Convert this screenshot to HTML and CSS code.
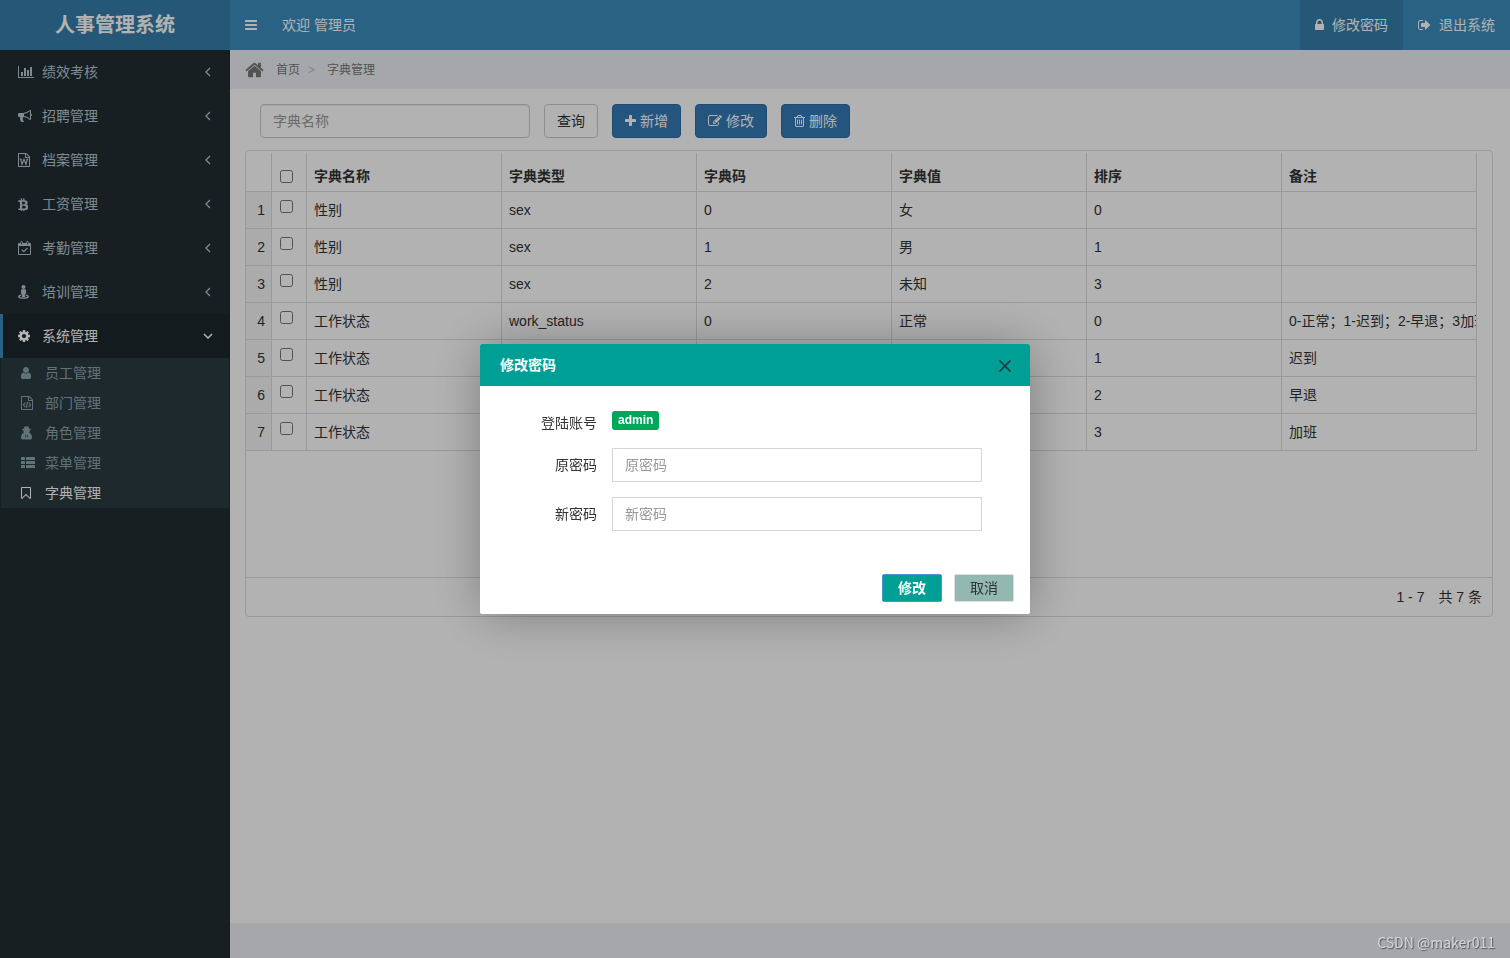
FILE: index.html
```html
<!DOCTYPE html>
<html lang="zh-CN">
<head>
<meta charset="utf-8">
<meta name="viewport" content="width=device-width, initial-scale=1">
<title>人事管理系统</title>
<link rel="stylesheet" href="styles.css">
</head>
<body>
<svg class="sprite" aria-hidden="true">
  <symbol id="i-bars" viewBox="128 0 1536 1792"><path d="M1664 1344v128q0 26-19 45t-45 19h-1408q-26 0-45-19t-19-45v-128q0-26 19-45t45-19h1408q26 0 45 19t19 45zm0-512v128q0 26-19 45t-45 19h-1408q-26 0-45-19t-19-45v-128q0-26 19-45t45-19h1408q26 0 45 19t19 45zm0-512v128q0 26-19 45t-45 19h-1408q-26 0-45-19t-19-45v-128q0-26 19-45t45-19h1408q26 0 45 19t19 45z"/></symbol>
  <symbol id="i-lock" viewBox="320 0 1152 1792"><path d="M640 768h512v-192q0-106-75-181t-181-75-181 75-75 181v192zm832 96v576q0 40-28 68t-68 28h-960q-40 0-68-28t-28-68v-576q0-40 28-68t68-28h32v-192q0-184 132-316t316-132 316 132 132 316v192h32q40 0 68 28t28 68z"/></symbol>
  <symbol id="i-out" viewBox="64 0 1664 1792"><path d="M704 1440q0 4 1 20t.5 26.500-3 23.500-10 19.500-20.500 6.500h-320q-119 0-203.500-84.500t-84.500-203.500v-704q0-119 84.500-203.500t203.500-84.500h320q13 0 22.500 9.500t9.500 22.500q0 4 1 20t.5 26.500-3 23.500-10 19.500-20.500 6.500h-320q-66 0-113 47t-47 113v704q0 66 47 113t113 47h312l11.500 1 11.500 3 8 5.500 7 9 2 13.500zm928-544q0 26-19 45l-544 544q-19 19-45 19t-45-19-19-45v-288h-448q-26 0-45-19t-19-45v-384q0-26 19-45t45-19h448v-288q0-26 19-45t45-19 45 19l544 544q19 19 19 45z"/></symbol>
  <symbol id="i-home" viewBox="64 0 1664 1792"><path d="M1472 992v480q0 26-19 45t-45 19h-384v-384h-256v384h-384q-26 0-45-19t-19-45v-480q0-1 .5-3t.5-3l575-474 575 474q1 2 1 6zm223-69l-62 74q-8 9-21 11h-3q-13 0-21-7l-692-577-692 577q-12 8-24 7-13-2-21-11l-62-74q-8-10-7-23.500t11-21.500l719-599q32-26 76-26t76 26l244 204v-195q0-14 9-23t23-9h192q14 0 23 9t9 23v408l219 182q10 8 11 21.500t-7 23.500z"/></symbol>
  <symbol id="i-plus" viewBox="192 0 1408 1792"><path d="M1600 736v192q0 40-28 68t-68 28h-416v416q0 40-28 68t-68 28h-192q-40 0-68-28t-28-68v-416h-416q-40 0-68-28t-28-68v-192q0-40 28-68t68-28h416v-416q0-40 28-68t68-28h192q40 0 68 28t28 68v416h416q40 0 68 28t28 68z"/></symbol>
  <symbol id="i-edit" viewBox="0 0 1792 1792"><path d="M888 1184l116-116-152-152-116 116v56h96v96h56zm440-720q-16-16-33 1l-350 350q-17 17-1 33t33-1l350-350q17-17 1-33zm80 594v190q0 119-84.500 203.500t-203.500 84.500h-832q-119 0-203.500-84.500t-84.500-203.500v-832q0-119 84.500-203.500t203.500-84.500h832q63 0 117 25 15 7 18 23 3 17-9 29l-49 49q-14 14-32 8-23-6-45-6h-832q-66 0-113 47t-47 113v832q0 66 47 113t113 47h832q66 0 113-47t47-113v-126q0-13 9-22l64-64q15-15 35-7t20 29zm-96-738l288 288-672 672h-288v-288zm444 132l-92 92-288-288 92-92q28-28 68-28t68 28l152 152q28 28 28 68t-28 68z"/></symbol>
  <symbol id="i-trash" viewBox="192 0 1408 1792"><path d="M704 736v576q0 14-9 23t-23 9h-64q-14 0-23-9t-9-23v-576q0-14 9-23t23-9h64q14 0 23 9t9 23zm256 0v576q0 14-9 23t-23 9h-64q-14 0-23-9t-9-23v-576q0-14 9-23t23-9h64q14 0 23 9t9 23zm256 0v576q0 14-9 23t-23 9h-64q-14 0-23-9t-9-23v-576q0-14 9-23t23-9h64q14 0 23 9t9 23zm128 724v-948h-896v948q0 22 7 40.500t14.500 27 10.500 8.500h832q3 0 10.500-8.500t14.500-27 7-40.500zm-672-1076h448l-48-117q-7-9-17-11h-317q-10 2-17 11zm928 32v64q0 14-9 23t-23 9h-96v948q0 83-47 143.500t-113 60.500h-832q-66 0-113-58.500t-47-141.500v-952h-96q-14 0-23-9t-9-23v-64q0-14 9-23t23-9h309l70-167q15-37 54-63t79-26h320q40 0 79 26t54 63l70 167h309q14 0 23 9t9 23z"/></symbol>
  <symbol id="i-chart" viewBox="0 0 2048 1792"><path d="M640 896v512h-256v-512h256zm384-512v1024h-256v-1024h256zm1024 1152v128h-2048v-1536h128v1408h1920zm-640-896v768h-256v-768h256zm384-384v1152h-256v-1152h256z"/></symbol>
  <symbol id="i-horn" viewBox="0 0 1792 1792"><path d="M1664 640q53 0 90.500 37.500t37.500 90.500-37.500 90.500-90.500 37.500v384q0 52-38 90t-90 38q-417-347-812-380-58 19-91 66t-31 100.500 40 92.500q-20 33-23 65.500t6 58 33.500 55 48 50 61.500 50.500q-29 58-111.500 83t-168.500 11.500-132-55.500q-7-23-29.500-87.500t-32-94.500-23-89-15-101 3.500-98.500 22-110.500h-122q-66 0-113-47t-47-113v-192q0-66 47-113t113-47h480q435 0 896-384 52 0 90 38t38 90v384zm-128 604v-954q-394 302-768 343v270q377 42 768 341z"/></symbol>
  <symbol id="i-word" viewBox="128 0 1536 1792"><path d="M1596 380q28 28 48 76t20 88v1152q0 40-28 68t-68 28h-1344q-40 0-68-28t-28-68v-1600q0-40 28-68t68-28h896q40 0 88 20t76 48zm-444-244v376h376q-10-29-22-41l-313-313q-12-12-41-22zm384 1528v-1024h-416q-40 0-68-28t-28-68v-416h-768v1536h1280z"/><path class="line" stroke-width="150" d="M350 820h260M1180 820h260M480 820L640 1460L896 800L1150 1460L1312 820"/></symbol>
  <symbol id="i-code" viewBox="128 0 1536 1792"><path d="M1596 380q28 28 48 76t20 88v1152q0 40-28 68t-68 28h-1344q-40 0-68-28t-28-68v-1600q0-40 28-68t68-28h896q40 0 88 20t76 48zm-444-244v376h376q-10-29-22-41l-313-313q-12-12-41-22zm384 1528v-1024h-416q-40 0-68-28t-28-68v-416h-768v1536h1280z"/><path class="line" stroke-width="150" d="M670 830L440 1130L670 1430M1120 830L1350 1130L1120 1430M970 740L820 1530"/></symbol>
  <symbol id="i-coin" viewBox="80 64 1180 1652"><path d="M1217 713q18 182-131 258 117 28 175 103t45 214q-7 71-32.500 125t-64.500 89-97 58.500-121.500 34.500-145.500 15v182h-154v-180q-80 0-122-1v181h-154v-182q-18 0-54-.5t-55-.5h-200l31-183h111q50 0 58-51v-402h16q-6-1-16-1v-287q-13-68-89-68h-111v-164l212 1q64 0 97-1v-252h154v247q82-2 122-2v-245h154v252q79 7 140 22.500t113 45 82.500 78 36.500 114.500zm-215 545q0-36-15-64t-37-46-57.500-30.500-65.500-18.500-74-9-69-3-64.500 1-47.500 1v338q8 0 37 .5t48 .5 53-1.500 58.500-4 57-8.500 55.500-14 47.500-21 39.500-30 24.500-40 9.500-51zm-71-476q0-33-12.500-58.500t-30.500-42-48-28-55-16.500-61.500-8-58-2.500-54 1-39.500.5v307q5 0 34.500.5t46.500 0 50-2 55-5.500 51.500-11 48.500-18.500 37-27 27-38.500 9-51z"/></symbol>
  <symbol id="i-calendar" viewBox="0 0 13 14"><path d="M0 3q0-1 1-1h1.500v-.8q0-1.200 1.100-1.200t1.100 1.200v.8h3.600v-.8q0-1.200 1.100-1.200t1.100 1.200v.8h1.500q1 0 1 1v10q0 1-1 1h-11q-1 0-1-1zM1 5v8h11v-8zM3.200 1v2.500h.8v-2.500zM9 1v2.500h.8v-2.500z"/><path class="line" stroke-width="1.200" d="M3.800 8.700l2 2 3.600-3.600"/></symbol>
  <symbol id="i-person" viewBox="0 0 12 14"><circle cx="5.500" cy="2" r="2"/><path d="M4 4.200h3q1 0 1 1v3.200l-.8.600v2.500q0 .8-.7.800h-2q-.7 0-.7-.8v-2.500l-.8-.6v-3.200q0-1 1-1z"/><path class="line" stroke-width="1.300" d="M3 10.200C-.6 10.800-.1 13.200 5.500 13.200S11.600 10.800 8 10.200"/></symbol>
  <symbol id="i-cog" viewBox="128 0 1536 1792"><path d="M1152 896q0-106-75-181t-181-75-181 75-75 181 75 181 181 75 181-75 75-181zm512-109v222q0 12-8 23t-20 13l-185 28q-19 54-39 91 35 50 107 138 10 12 10 25t-9 23q-27 37-99 108t-94 71q-12 0-26-9l-138-108q-44 23-91 38-16 136-29 186-7 28-36 28h-222q-14 0-24.500-8.500t-11.500-21.500l-28-184q-49-16-90-37l-141 107q-10 9-25 9-14 0-25-11-126-114-165-168-7-10-7-23 0-12 8-23 15-21 51-66.500t54-70.500q-27-50-41-99l-183-27q-13-2-21-12.500t-8-23.500v-222q0-12 8-23t19-13l186-28q14-46 39-92-40-57-107-138-10-12-10-24 0-10 9-23 26-36 98.500-107.500t94.500-71.500q13 0 26 10l138 107q44-23 91-38 16-136 29-186 7-28 36-28h222q14 0 24.500 8.500t11.500 21.500l28 184q49 16 90 37l142-107q9-9 24-9 13 0 25 10 129 119 165 170 7 8 7 22 0 12-8 23-15 21-51 66.500t-54 70.500q26 50 41 98l183 28q13 2 21 12.500t8 23.500z"/></symbol>
  <symbol id="i-user" viewBox="256 0 1280 1792"><path d="M1536 1399q0 109-62.500 187t-150.500 78h-854q-88 0-150.500-78t-62.500-187q0-85 8.500-160.500t31.500-152 58.500-131 94-89 134.500-34.500q131 128 313 128t313-128q76 0 134.500 34.500t94 89 58.500 131 31.500 152 8.500 160.500zm-256-887q0 159-112.500 271.500t-271.500 112.500-271.500-112.500-112.500-271.500 112.500-271.500 271.500-112.500 271.500 112.500 112.500 271.500z"/></symbol>
  <symbol id="i-agent" viewBox="0 0 11 14"><path fill-rule="evenodd" d="M3 2.500Q3.200.2 4.300.2l1.200.4L6.700.2Q7.800.2 8 2.500q2 .4 2 1T8.600 4.300v1.200Q8.500 6.500 8.200 7l1.300.4Q11 8.500 11 11.500q0 1.900-1.500 1.900h-8Q0 13.400 0 11.500 0 8.500 1.500 7.400L2.800 7Q2.500 6.500 2.400 5.500V4.300Q1 4.100 1 3.500t2-1zM4.100 8.600l.6 3.600.5-2.400zM6.900 8.600l-1.100 1.200.5 2.400z"/></symbol>
  <symbol id="i-list" viewBox="0 0 14 14"><rect y="1" width="4" height="3" rx=".6"/><rect x="5" y="1" width="9" height="3" rx=".6"/><rect y="5" width="4" height="3" rx=".6"/><rect x="5" y="5" width="9" height="3" rx=".6"/><rect y="9" width="4" height="3" rx=".6"/><rect x="5" y="9" width="9" height="3" rx=".6"/></symbol>
  <symbol id="i-mark" viewBox="256 0 1280 1792"><path d="M1408 256h-1024v1242l423-406 89-85 89 85 423 406v-1242zm12-128q23 0 44 9 33 13 52.500 41t19.500 62v1289q0 34-19.500 62t-52.500 41q-19 8-44 8-48 0-83-32l-441-424-441 424q-36 33-83 33-23 0-44-9-33-13-52.500-41t-19.500-62v-1289q0-34 19.500-62t52.500-41q21-9 44-9h1048z"/></symbol>
  <symbol id="i-left" viewBox="0 0 6 10"><path class="line" stroke-width="1.300" d="M5 1L1 5l4 4"/></symbol>
  <symbol id="i-down" viewBox="0 0 10 6"><path class="line" stroke-width="1.500" d="M1 1l4 4 4-4"/></symbol>
</svg>

<div class="app">
  <aside class="side">
    <a class="brand" href="#">人事管理系统</a>
    <nav>
      <ul class="menu">
        <li><a class="menu-link" href="#"><span class="ico"><svg width="16" height="14"><use href="#i-chart"/></svg></span>绩效考核<svg class="arrow" width="6" height="10"><use href="#i-left"/></svg></a></li>
        <li><a class="menu-link" href="#"><span class="ico"><svg width="14" height="14"><use href="#i-horn"/></svg></span>招聘管理<svg class="arrow" width="6" height="10"><use href="#i-left"/></svg></a></li>
        <li><a class="menu-link" href="#"><span class="ico"><svg width="12" height="14"><use href="#i-word"/></svg></span>档案管理<svg class="arrow" width="6" height="10"><use href="#i-left"/></svg></a></li>
        <li><a class="menu-link" href="#"><span class="ico"><svg width="10" height="14"><use href="#i-coin"/></svg></span>工资管理<svg class="arrow" width="6" height="10"><use href="#i-left"/></svg></a></li>
        <li><a class="menu-link" href="#"><span class="ico"><svg width="13" height="14"><use href="#i-calendar"/></svg></span>考勤管理<svg class="arrow" width="6" height="10"><use href="#i-left"/></svg></a></li>
        <li><a class="menu-link" href="#"><span class="ico"><svg width="12" height="14"><use href="#i-person"/></svg></span>培训管理<svg class="arrow" width="6" height="10"><use href="#i-left"/></svg></a></li>
        <li>
          <a class="menu-link open" href="#"><span class="ico"><svg width="12" height="14"><use href="#i-cog"/></svg></span>系统管理<svg class="arrow" width="10" height="6"><use href="#i-down"/></svg></a>
          <ul class="submenu">
            <li><a href="#"><span class="ico"><svg width="10" height="14"><use href="#i-user"/></svg></span>员工管理</a></li>
            <li><a href="#"><span class="ico"><svg width="12" height="14"><use href="#i-code"/></svg></span>部门管理</a></li>
            <li><a href="#"><span class="ico"><svg width="11" height="14"><use href="#i-agent"/></svg></span>角色管理</a></li>
            <li><a href="#"><span class="ico"><svg width="14" height="14"><use href="#i-list"/></svg></span>菜单管理</a></li>
            <li><a class="current" href="#"><span class="ico"><svg width="10" height="14"><use href="#i-mark"/></svg></span>字典管理</a></li>
          </ul>
        </li>
      </ul>
    </nav>
  </aside>

  <div class="page">
    <header class="topbar">
      <button class="toggle" type="button" aria-label="切换菜单"><svg width="12" height="14"><use href="#i-bars"/></svg></button>
      <span class="welcome">欢迎 管理员</span>
      <a class="top-link active" href="#"><svg width="9" height="14"><use href="#i-lock"/></svg>修改密码</a>
      <a class="top-link" href="#"><svg width="13" height="14"><use href="#i-out"/></svg>退出系统</a>
    </header>
    <nav class="crumbs">
      <svg width="19" height="20"><use href="#i-home"/></svg>
      <a href="#">首页</a>
      <span class="sep">&gt;</span>
      <span>字典管理</span>
    </nav>
    <main class="content">
      <div class="tools">
        <input class="field" type="text" placeholder="字典名称" aria-label="字典名称">
        <button class="btn" type="button">查询</button>
        <button class="btn primary" type="button"><svg width="11" height="14"><use href="#i-plus"/></svg>新增</button>
        <button class="btn primary" type="button"><svg width="14" height="14"><use href="#i-edit"/></svg>修改</button>
        <button class="btn primary" type="button"><svg width="11" height="14"><use href="#i-trash"/></svg>删除</button>
      </div>
      <section class="panel">
        <div class="grid">
          <table>
            <colgroup><col class="c-num"><col class="c-check"><col span="6"></colgroup>
            <thead>
              <tr><th></th><th><input type="checkbox" aria-label="全选"></th><th>字典名称</th><th>字典类型</th><th>字典码</th><th>字典值</th><th>排序</th><th>备注</th></tr>
            </thead>
            <tbody>
              <tr><td class="num">1</td><td><input type="checkbox" aria-label="选择第1行"></td><td>性别</td><td>sex</td><td>0</td><td>女</td><td>0</td><td></td></tr>
              <tr><td class="num">2</td><td><input type="checkbox" aria-label="选择第2行"></td><td>性别</td><td>sex</td><td>1</td><td>男</td><td>1</td><td></td></tr>
              <tr><td class="num">3</td><td><input type="checkbox" aria-label="选择第3行"></td><td>性别</td><td>sex</td><td>2</td><td>未知</td><td>3</td><td></td></tr>
              <tr><td class="num">4</td><td><input type="checkbox" aria-label="选择第4行"></td><td>工作状态</td><td>work_status</td><td>0</td><td>正常</td><td>0</td><td>0-正常；1-迟到；2-早退；3加班</td></tr>
              <tr><td class="num">5</td><td><input type="checkbox" aria-label="选择第5行"></td><td>工作状态</td><td></td><td></td><td></td><td>1</td><td>迟到</td></tr>
              <tr><td class="num">6</td><td><input type="checkbox" aria-label="选择第6行"></td><td>工作状态</td><td></td><td></td><td></td><td>2</td><td>早退</td></tr>
              <tr><td class="num">7</td><td><input type="checkbox" aria-label="选择第7行"></td><td>工作状态</td><td></td><td></td><td></td><td>3</td><td>加班</td></tr>
            </tbody>
          </table>
        </div>
        <div class="pager"><span>1 - 7</span><span>共 7 条</span></div>
      </section>
    </main>
    <footer class="foot"></footer>
  </div>
</div>

<div class="shade">
  <form class="dialog" role="dialog" aria-labelledby="dialog-title">
    <header class="dialog-head">
      <h2 id="dialog-title">修改密码</h2>
      <button class="close" type="button" aria-label="关闭"><svg width="12" height="12" viewBox="0 0 12 12"><path class="line" stroke-width="1.500" d="M.5.500l11 11M11.500.500l-11 11"/></svg></button>
    </header>
    <div class="dialog-body">
      <span class="label account">登陆账号</span><span class="value"><b class="badge">admin</b></span>
      <label class="label" for="old">原密码</label><input id="old" type="password" placeholder="原密码">
      <label class="label" for="new">新密码</label><input id="new" type="password" placeholder="新密码">
    </div>
    <footer class="dialog-foot">
      <button class="ok" type="button">修改</button>
      <button class="cancel" type="button">取消</button>
    </footer>
  </form>
</div>
<div class="watermark">CSDN @maker011</div>
</body>
</html>
```
FILE: styles.css
```css
* { box-sizing: border-box; }

body {
  margin: 0;
  font: 14px/20px "Liberation Sans", "Noto Sans CJK SC", sans-serif;
  color: #333;
}

a { color: inherit; text-decoration: none; }
ul { margin: 0; padding: 0; list-style: none; }
button, input { font: inherit; }
button { cursor: pointer; }
svg { display: block; flex: none; fill: currentColor; }
.line { fill: none; stroke: currentColor; }
.sprite { position: absolute; width: 0; height: 0; }

.app { display: flex; min-height: 100vh; }

/* Sidebar */
.side { flex: none; width: 230px; background: #222d32; color: #b8c7ce; }
.brand {
  display: block;
  background: #367fa9;
  color: #fff;
  font-size: 20px;
  font-weight: bold;
  line-height: 50px;
  text-align: center;
}
.menu-link {
  display: flex;
  align-items: center;
  padding: 12px 17px 12px 15px;
  border-left: 3px solid transparent;
}
.menu-link.open { background: #1e282c; border-left-color: #3c8dbc; color: #fff; }
.ico { flex: none; width: 24px; }
.arrow { margin: 0 2px 0 auto; }
.open .arrow { margin-right: 0; }
.submenu { margin: 0 1px; background: #2c3b41; color: #8aa4af; }
.submenu a { display: flex; align-items: center; padding: 5px 20px; }
.submenu .current { color: #fff; }

/* Page frame */
.page { flex: 1; min-width: 0; display: flex; flex-direction: column; background: #ecf0f5; }
.topbar { display: flex; height: 50px; background: #3c8dbc; color: #fff; }
.toggle { padding: 0 15px; border: 0; background: none; color: inherit; }
.welcome { margin: 15px auto 15px 10px; }
.top-link { display: flex; align-items: center; gap: 8px; padding: 0 15px; }
.top-link.active { background: #367fa9; }
.crumbs {
  display: flex;
  align-items: center;
  height: 39px;
  padding-left: 15px;
  font-size: 12px;
  color: #777;
}
.crumbs a { margin-left: 12px; }
.crumbs .sep { margin: 0 12px 0 8px; color: #bbb; }
.content { flex: 1; padding: 15px 17px 0 15px; background: #fff; }
.foot { height: 35px; }

/* Toolbar */
.tools { display: flex; gap: 14px; padding-left: 15px; }
.field {
  width: 270px;
  height: 34px;
  padding: 6px 12px;
  border: 1px solid #ccc;
  border-radius: 4px;
  box-shadow: inset 0 1px 1px rgba(0, 0, 0, .08);
}
input::placeholder { color: #999; opacity: 1; }
.btn {
  display: flex;
  align-items: center;
  gap: 4px;
  padding: 6px 12px;
  border: 1px solid #ccc;
  border-radius: 4px;
  background: #fff;
  color: #333;
}
.btn.primary { background: #337ab7; border-color: #2e6da4; color: #fff; }

/* Data grid */
.panel { margin-top: 12px; border: 1px solid #ddd; border-radius: 4px; }
.grid { min-height: 426px; padding: 2px 15px 0 0; }
table { width: 100%; table-layout: fixed; border-collapse: separate; border-spacing: 0; }
.c-num { width: 26px; }
.c-check { width: 35px; }
th, td {
  height: 37px;
  padding: 8px 7px;
  border: solid #ddd;
  border-width: 0 1px 1px 0;
  overflow: hidden;
  text-align: left;
  vertical-align: top;
  white-space: nowrap;
}
th { height: 39px; padding: 13px 7px 5px; }
td.num { padding: 8px 6px; background: #f5f5f5; text-align: right; }
table input { display: block; margin: 0 1px; }
th input { margin-top: 4px; }
.pager {
  display: flex;
  justify-content: flex-end;
  gap: 14px;
  padding: 9px 10px;
  border-top: 1px solid #ddd;
}

/* Dialog */
.shade {
  position: fixed;
  inset: 0;
  display: flex;
  align-items: center;
  justify-content: center;
  background: rgba(0, 0, 0, .3);
}
.dialog {
  width: 550px;
  border-radius: 2px;
  background: #fff;
  box-shadow: 1px 1px 50px rgba(0, 0, 0, .3);
}
.dialog-head {
  display: flex;
  align-items: center;
  justify-content: space-between;
  height: 42px;
  padding: 0 19px 0 20px;
  border-radius: 2px 2px 0 0;
  background: #009f95;
}
.dialog-head h2 { margin: 0; font-size: 14px; color: #fff; }
.close { padding: 2px 0 0; border: 0; background: none; color: #2e2d3c; }
.dialog-body {
  display: grid;
  grid-template-columns: 97px 1fr;
  gap: 15px;
  align-items: center;
  padding: 25px 48px 0 20px;
}
.label { text-align: right; }
.account { padding-top: 2px; }
.value { display: flex; height: 22px; }
.badge {
  height: 19px;
  padding: 0 6px;
  border-radius: 3px;
  background: #00a65a;
  color: #fff;
  font-size: 12px;
  line-height: 18px;
}
.dialog-body input {
  width: 100%;
  height: 34px;
  padding: 6px 12px;
  border: 1px solid #d2d6de;
}
.dialog-foot {
  display: flex;
  justify-content: flex-end;
  gap: 12px;
  padding: 43px 16px 12px;
}
.dialog-foot button { width: 60px; height: 28px; padding: 0; border: 1px solid; border-radius: 2px; }
.dialog-foot .ok { background: #009f95; border-color: #4898d5; color: #fff; font-weight: bold; }
.dialog-foot .cancel { background: #92b8b1; border-color: #dedede; color: #333; }

.watermark {
  position: fixed;
  right: 15px;
  bottom: 6px;
  color: #d4d6d8;
  font-family: "Noto Sans CJK SC", sans-serif;
  text-shadow: 1px 1px 1px #555;
}
```
